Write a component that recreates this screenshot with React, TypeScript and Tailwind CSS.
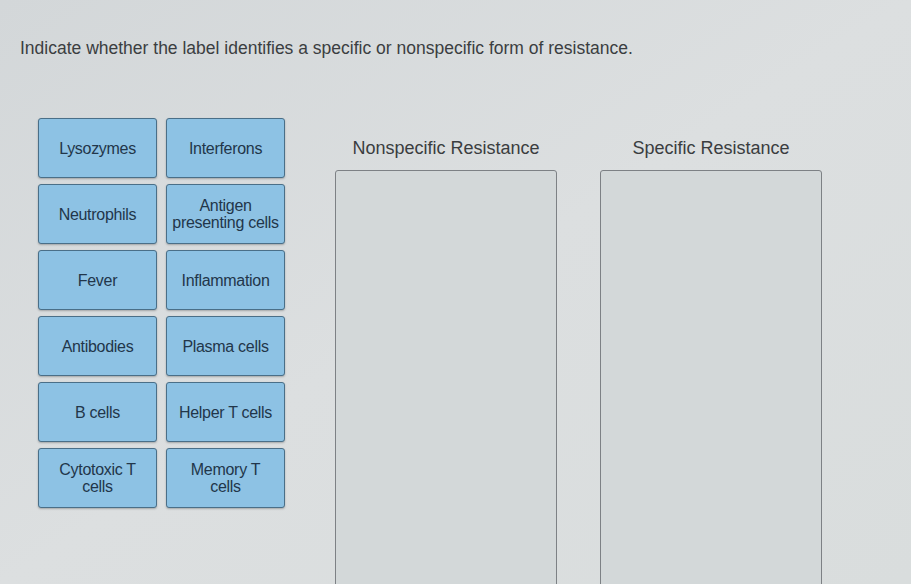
import React from 'react';

const leftCol = ['Lysozymes', 'Neutrophils', 'Fever', 'Antibodies', 'B cells', 'Cytotoxic T\ncells'];
const rightCol = ['Interferons', 'Antigen\npresenting cells', 'Inflammation', 'Plasma cells', 'Helper T cells', 'Memory T\ncells'];

const Label: React.FC<{ text: string }> = ({ text }) => (
  <div className="h-[60px] w-[119px] flex items-center justify-center text-center whitespace-pre-line px-[3px] rounded-[3px] border border-[#4a6f88] bg-[#8dc2e4] shadow-[0_1px_2px_rgba(0,0,0,0.25)] text-[16px] leading-[17px] text-[#22364a] tracking-[-0.3px]">
    {text}
  </div>
);

const DropZone: React.FC<{ title: string }> = ({ title }) => (
  <div className="flex flex-col w-[222px]">
    <h2 className="text-[18px] text-[#3a3d40] text-center mb-[12px] leading-5">{title}</h2>
    <div className="h-[440px] border border-[#7d8185] rounded-[3px] bg-[#d3d8d9]" />
  </div>
);

export default function App() {
  return (
    <div
      className="w-[911px] h-[584px] overflow-hidden bg-gradient-to-br from-[#d3d7d9] via-[#dcdfe0] to-[#d9dddd] pl-[20px] pt-[38px]"
      style={{ fontFamily: '"Liberation Sans", Arial, sans-serif' }}
    >
      <p className="text-[17.5px] text-[#3b3e41] leading-5">
        Indicate whether the label identifies a specific or nonspecific form of resistance.
      </p>
      <div className="flex mt-[60px] pl-[18px]">
        <div className="grid grid-cols-2 gap-x-[9px] gap-y-[6px] w-[247px] h-fit">
          {leftCol.map((l, i) => (
            <React.Fragment key={l}>
              <Label text={l} />
              <Label text={rightCol[i]} />
            </React.Fragment>
          ))}
        </div>
        <div className="flex gap-[43px] ml-[50px] mt-[20px]">
          <DropZone title="Nonspecific Resistance" />
          <DropZone title="Specific Resistance" />
        </div>
      </div>
    </div>
  );
}
